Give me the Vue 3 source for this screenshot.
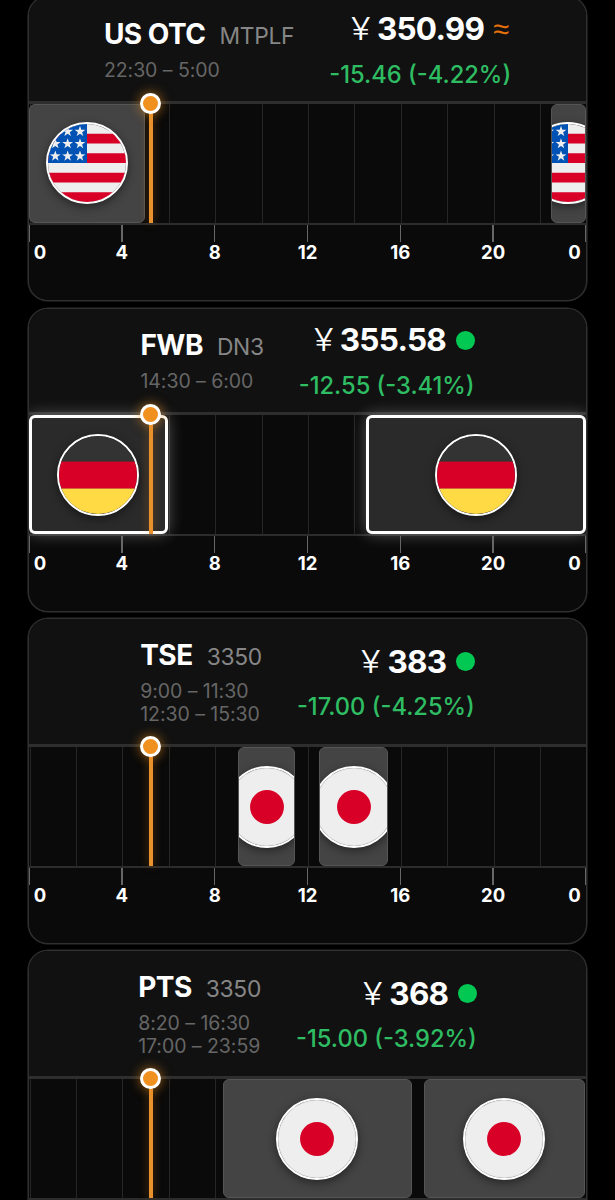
<script setup>
const NOW = 5.25
const markets = [
  {
    name: 'US OTC', ticker: 'MTPLF', hours: ['22:30 – 5:00'], price: '350.99', change: '-15.46 (-4.22%)',
    status: 'approx', flag: 'us', active: false, labels: true, sessions: [[0, 5], [22.5, 24]],
  },
  {
    name: 'FWB', ticker: 'DN3', hours: ['14:30 – 6:00'], price: '355.58', change: '-12.55 (-3.41%)',
    status: 'live', flag: 'de', active: true, labels: true, sessions: [[0, 6], [14.5, 24]],
  },
  {
    name: 'TSE', ticker: '3350', hours: ['9:00 – 11:30', '12:30 – 15:30'], price: '383', change: '-17.00 (-4.25%)',
    status: 'live', flag: 'jp', active: false, labels: true, sessions: [[9, 11.5], [12.5, 15.5]],
  },
  {
    name: 'PTS', ticker: '3350', hours: ['8:20 – 16:30', '17:00 – 23:59'], price: '368', change: '-15.00 (-3.92%)',
    status: 'live', flag: 'jp', active: false, labels: false, sessions: [[8.36, 16.5], [17, 23.983]],
  },
]
const grid = [0, 2, 4, 6, 8, 10, 12, 14, 16, 18, 20, 22]
const ticks = [0, 4, 8, 12, 16, 20, 24]
const pct = (h) => (h / 24) * 100 + '%'

const stars = []
for (const y of [49, 130, 211]) for (const x of [48, 129, 210]) stars.push([x, y])
const starPoints = (cx, cy) =>
  Array.from({ length: 10 }, (_, i) => {
    const r = i % 2 ? 14.5 : 37
    const a = (Math.PI / 5) * i - Math.PI / 2
    return `${(cx + r * Math.cos(a)).toFixed(1)},${(cy + r * Math.sin(a)).toFixed(1)}`
  }).join(' ')
</script>

<template>
  <main class="page">
    <section v-for="m in markets" :key="m.name" class="card">
      <header class="head" :class="{ tall: m.hours.length > 1 }">
        <div class="info">
          <div class="title">
            <span class="name">{{ m.name }}</span>
            <span class="ticker">{{ m.ticker }}</span>
          </div>
          <div v-for="h in m.hours" :key="h" class="hours">{{ h }}</div>
        </div>
        <div class="quote">
          <div class="price">
            <span class="yen">¥</span>
            <span class="amount">{{ m.price }}</span>
            <span v-if="m.status === 'live'" class="dot"></span>
            <span v-else class="approx">≈</span>
          </div>
          <div class="change">{{ m.change }}</div>
        </div>
      </header>

      <div class="track">
        <i v-for="g in grid" :key="g" class="gridline" :style="{ left: pct(g) }"></i>
        <div
          v-for="s in m.sessions" :key="s[0]" class="session" :class="{ active: m.active }"
          :style="{ left: pct(s[0]), width: `calc(${pct(s[1] - s[0])} - 0.4px)` }"
        >
          <div class="clip">
            <div class="flag">
              <svg v-if="m.flag === 'us'" viewBox="0 0 512 512">
                <rect width="512" height="512" fill="#eee" />
                <rect v-for="n in 4" :key="n" :y="n * 128 - 64" width="512" height="64" fill="#d80027" />
                <rect width="256" height="256" fill="#0052b4" />
                <polygon v-for="(p, i) in stars" :key="'s' + i" :points="starPoints(p[0], p[1])" fill="#eee" />
              </svg>
              <svg v-else-if="m.flag === 'de'" viewBox="0 0 512 512">
                <rect width="512" height="172" fill="#333" />
                <rect y="168" width="512" height="178" fill="#d80027" />
                <rect y="345" width="512" height="167" fill="#ffda44" />
              </svg>
              <svg v-else viewBox="0 0 512 512">
                <rect width="512" height="512" fill="#eee" />
                <circle cx="256" cy="256" r="111.3" fill="#d80027" />
                <circle cx="256" cy="256" r="254" fill="none" stroke="#d2d2d2" stroke-width="3" />
              </svg>
            </div>
          </div>
        </div>
        <div class="now" :style="{ left: pct(NOW) }"><b></b></div>
      </div>

      <div class="axis">
        <template v-if="m.labels">
          <div v-for="t in ticks" :key="t" class="tick" :class="{ first: t === 0, last: t === 24 }" :style="{ left: pct(t) }">
            <i></i><span>{{ t % 24 }}</span>
          </div>
        </template>
      </div>
    </section>
  </main>
</template>

<style>
html, body { background: #000; overflow: hidden; }
</style>

<style scoped>
.page {
  box-sizing: border-box;
  height: 1200px;
  overflow: hidden;
  padding: 0 28px;
  background: #000;
  font-family: Inter, "Liberation Sans", sans-serif;
}
.card {
  box-sizing: border-box;
  border: 1px solid #303030;
  border-radius: 20px;
  box-shadow: 0 0 0 0.6px #2c2c2c;
  background: #0a0a0a;
  overflow: hidden;
  margin-bottom: 6px;
}
.card:first-child { margin-top: -3.6px; }
.card:nth-child(2) { margin-top: 6.3px; }
.head {
  box-sizing: border-box;
  height: 103.3px;
  background: #111;
  display: flex;
  justify-content: center;
  align-items: center;
  gap: 35px;
}
.head.tall { height: 124.5px; }
.info { padding-bottom: 2px; }
.title {
  height: 45px;
  line-height: 41px;
  display: flex;
  align-items: baseline;
  gap: 14px;
  white-space: nowrap;
}
.name { color: #fff; font-size: 28px; font-weight: 700; letter-spacing: -0.5px; }
.ticker { color: #868686; font-size: 22.8px; letter-spacing: -0.3px; }
.hours { color: #666; font-size: 19.5px; letter-spacing: -0.05px; line-height: 23.5px; white-space: nowrap; }
.quote { padding-top: 5px; }
.price {
  height: 45px;
  display: flex;
  align-items: center;
  justify-content: flex-end;
  line-height: 44px;
  color: #fff;
}
.yen { font-size: 30.5px; font-weight: 300; width: 26px; text-align: left; transform: scaleX(1.18); transform-origin: left; }
.amount { font-size: 31.5px; font-weight: 700; letter-spacing: -0.75px; }
.dot { width: 19px; height: 19px; border-radius: 50%; background: #00c853; margin-left: 9.5px; }
.approx { font-family: "Liberation Sans", sans-serif; font-size: 29px; color: #e8710a; margin-left: 9px; margin-right: 2px; }
.change { color: #2fbd63; font-size: 23.7px; font-weight: 500; line-height: 45px; text-align: right; white-space: nowrap; }

.track {
  position: relative;
  box-sizing: border-box;
  height: 124.5px;
  border-top: 3px solid #2e2e2e;
  border-bottom: 2px solid #2c2c2c;
}
.gridline { position: absolute; top: 0; bottom: 0; width: 1px; margin-left: 0.5px; background: #262626; }
.session {
  position: absolute;
  top: 0;
  height: 119.5px;
  box-sizing: border-box;
  background: #444;
  border: 1.5px solid #555;
  border-radius: 6px;
}
.session.active {
  background: #2a2a2a;
  border: 3px solid #fff;
  box-shadow: 0 0 16px rgba(255, 255, 255, 0.32);
}
.clip {
  height: 100%;
  overflow: hidden;
  border-radius: 4px;
  display: flex;
  align-items: center;
  justify-content: center;
}
.flag {
  flex: none;
  box-sizing: border-box;
  width: 82px;
  height: 82px;
  border: 2px solid #fff;
  border-radius: 50%;
  overflow: hidden;
  box-shadow: 0 3px 10px rgba(0, 0, 0, 0.45);
}
.flag svg { display: block; width: 100%; height: 100%; }
.now {
  position: absolute;
  top: 0;
  bottom: 0;
  width: 4px;
  margin-left: -2px;
  background: #e8912d;
  box-shadow: 0 0 10px rgba(247, 147, 26, 0.35);
}
.now b {
  position: absolute;
  left: -8.5px;
  top: -11px;
  box-sizing: border-box;
  width: 21px;
  height: 21px;
  border: 3.5px solid #fff;
  border-radius: 50%;
  background: #f0901e;
  box-shadow: 0 0 12px rgba(247, 147, 26, 0.65);
}
.axis { position: relative; height: 75px; }
.tick { position: absolute; top: 0; width: 0; display: flex; flex-direction: column; align-items: center; }
.tick i { width: 1.5px; height: 17px; flex: none; background: #666; }
.tick span { color: #fff; font-size: 18.5px; font-weight: 700; line-height: 20px; }
.tick.first span { margin-left: 22px; }
.tick.last { margin-left: -0.5px; }
.tick.last span { margin-left: -22px; }
</style>
